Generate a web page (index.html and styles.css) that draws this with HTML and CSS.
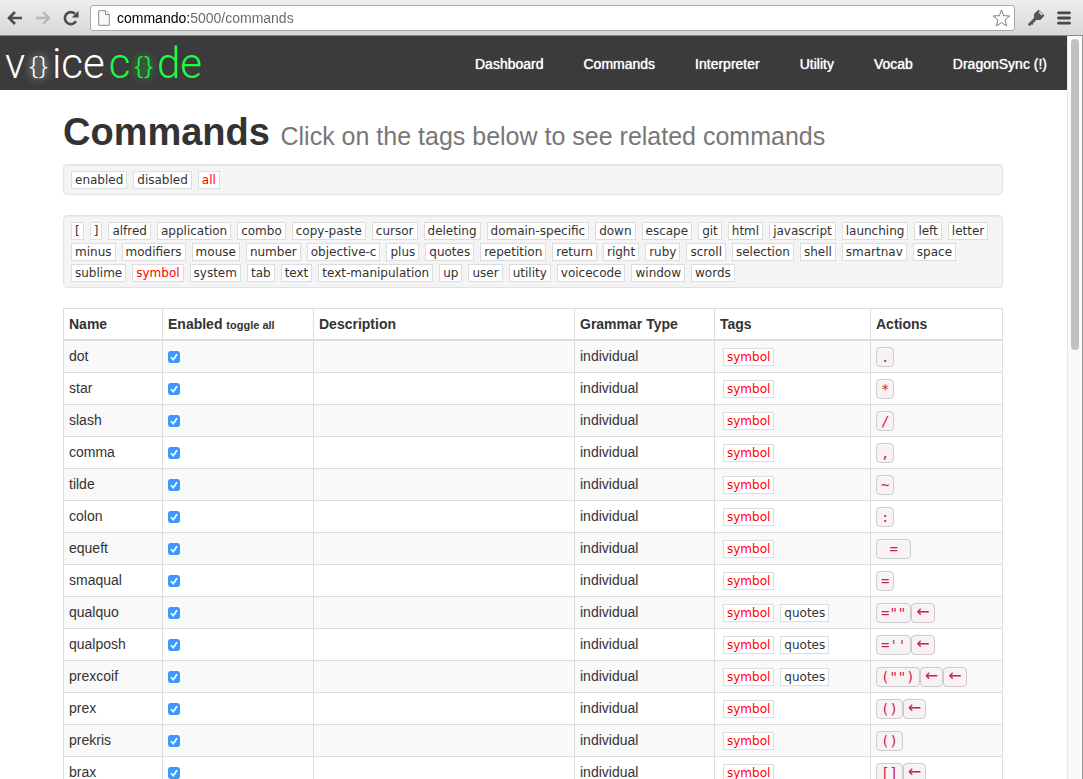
FILE: index.html
```html
<!DOCTYPE html>
<html lang="en">
<head>
<meta charset="utf-8">
<title>VoiceCode Commands</title>
<link rel="stylesheet" href="styles.css">
</head>
<body>
<div class="toolbar">
  <button class="tool" type="button" aria-label="Back"><svg width="16" height="14" viewBox="0 0 16 14"><path d="M8 1 2 7l6 6M2.500 7H15" fill="none" stroke="#4c4c4c" stroke-width="2.600"/></svg></button>
  <button class="tool" type="button" aria-label="Forward"><svg width="16" height="14" viewBox="0 0 16 14"><path d="M8 1l6 6-6 6M13.500 7H1" fill="none" stroke="#b9b9b9" stroke-width="2.400"/></svg></button>
  <button class="tool" type="button" aria-label="Reload"><svg width="16" height="16" viewBox="0 0 16 16"><path d="M13 11.200A6 6 0 1 1 12 3.800" fill="none" stroke="#4c4c4c" stroke-width="2.600"/><path d="M15.500 .8V7.500H8.800z" fill="#4c4c4c"/></svg></button>
  <div class="address">
    <svg width="12" height="16" viewBox="0 0 12 16"><path d="M.7.7h6.800l3.800 3.800v10.800H.7z" fill="#f8f8f8" stroke="#8c8c8c"/><path d="M7.500.7v3.800h3.800" fill="#fff" stroke="#8c8c8c"/></svg>
    <input class="url" type="text" aria-label="Address" value="commando:5000/commands">
    <button class="star" type="button" aria-label="Bookmark"><svg width="19" height="18" viewBox="0 0 19 18"><path d="M9.500 1l2.200 5.700 6.100.3-4.700 3.900 1.600 6-5.200-3.300-5.200 3.300 1.600-6L1.200 7l6.100-.3z" fill="#fff" stroke="#7d7d7d" stroke-linejoin="round"/></svg></button>
  </div>
  <button class="tool" type="button" aria-label="Key"><svg width="18" height="18" viewBox="0 0 18 18"><path d="M10 8 1.800 16.200" stroke="#555" stroke-width="2.800"/><path d="M3.800 13.200l2.200 2.200M5.800 11.400l1.800 1.800" stroke="#555" stroke-width="1.600"/><path d="M11.500 1.200 7.600 4.800l-.2 4 1.800 1.800 4.200-.2L17 6.500z" fill="#555" stroke="#555" stroke-linejoin="round"/><path d="M12.200 3l3 3" stroke="#e4e4e4" stroke-width="1.600"/></svg></button>
  <button class="tool" type="button" aria-label="Menu"><svg width="14" height="14" viewBox="0 0 14 14"><path d="M1.500 1.800h11M1.500 7h11M1.500 12.200h11" stroke="#484848" stroke-width="2.800" stroke-linecap="round"/></svg></button>
</div>
<div class="viewport">
  <div class="page">
    <header class="navbar">
      <a class="logo" href="#"><span>v</span><span class="brace">{}</span><span>ice</span><span class="green">c</span><span class="green brace">{}</span><span class="green">de</span></a>
      <nav class="links"><a href="#">Dashboard</a><a href="#">Commands</a><a href="#">Interpreter</a><a href="#">Utility</a><a href="#">Vocab</a><a href="#">DragonSync (!)</a></nav>
    </header>
    <main class="container">
      <h1>Commands <small>Click on the tags below to see related commands</small></h1>
      <div class="well"><a class="tag" href="#">enabled</a><a class="tag" href="#">disabled</a><a class="tag on" href="#">all</a></div>
      <div class="well"><a class="tag" href="#">[</a><a class="tag" href="#">]</a><a class="tag" href="#">alfred</a><a class="tag" href="#">application</a><a class="tag" href="#">combo</a><a class="tag" href="#">copy-paste</a><a class="tag" href="#">cursor</a><a class="tag" href="#">deleting</a><a class="tag" href="#">domain-specific</a><a class="tag" href="#">down</a><a class="tag" href="#">escape</a><a class="tag" href="#">git</a><a class="tag" href="#">html</a><a class="tag" href="#">javascript</a><a class="tag" href="#">launching</a><a class="tag" href="#">left</a><a class="tag" href="#">letter</a><a class="tag" href="#">minus</a><a class="tag" href="#">modifiers</a><a class="tag" href="#">mouse</a><a class="tag" href="#">number</a><a class="tag" href="#">objective-c</a><a class="tag" href="#">plus</a><a class="tag" href="#">quotes</a><a class="tag" href="#">repetition</a><a class="tag" href="#">return</a><a class="tag" href="#">right</a><a class="tag" href="#">ruby</a><a class="tag" href="#">scroll</a><a class="tag" href="#">selection</a><a class="tag" href="#">shell</a><a class="tag" href="#">smartnav</a><a class="tag" href="#">space</a><a class="tag" href="#">sublime</a><a class="tag on" href="#">symbol</a><a class="tag" href="#">system</a><a class="tag" href="#">tab</a><a class="tag" href="#">text</a><a class="tag" href="#">text-manipulation</a><a class="tag" href="#">up</a><a class="tag" href="#">user</a><a class="tag" href="#">utility</a><a class="tag" href="#">voicecode</a><a class="tag" href="#">window</a><a class="tag" href="#">words</a></div>
      <table class="commands">
        <colgroup><col class="c-name"><col class="c-enabled"><col class="c-desc"><col class="c-type"><col class="c-tags"><col class="c-actions"></colgroup>
        <thead><tr><th>Name</th><th>Enabled <a class="toggle" href="#">toggle all</a></th><th>Description</th><th>Grammar Type</th><th>Tags</th><th>Actions</th></tr></thead>
        <tbody>
          <tr><td>dot</td><td><input type="checkbox" aria-label="dot" checked></td><td></td><td>individual</td><td><div class="tags"><a class="tag on" href="#">symbol</a></div></td><td><div class="keys"><kbd>.</kbd></div></td></tr>
          <tr><td>star</td><td><input type="checkbox" aria-label="star" checked></td><td></td><td>individual</td><td><div class="tags"><a class="tag on" href="#">symbol</a></div></td><td><div class="keys"><kbd>*</kbd></div></td></tr>
          <tr><td>slash</td><td><input type="checkbox" aria-label="slash" checked></td><td></td><td>individual</td><td><div class="tags"><a class="tag on" href="#">symbol</a></div></td><td><div class="keys"><kbd>/</kbd></div></td></tr>
          <tr><td>comma</td><td><input type="checkbox" aria-label="comma" checked></td><td></td><td>individual</td><td><div class="tags"><a class="tag on" href="#">symbol</a></div></td><td><div class="keys"><kbd>,</kbd></div></td></tr>
          <tr><td>tilde</td><td><input type="checkbox" aria-label="tilde" checked></td><td></td><td>individual</td><td><div class="tags"><a class="tag on" href="#">symbol</a></div></td><td><div class="keys"><kbd>~</kbd></div></td></tr>
          <tr><td>colon</td><td><input type="checkbox" aria-label="colon" checked></td><td></td><td>individual</td><td><div class="tags"><a class="tag on" href="#">symbol</a></div></td><td><div class="keys"><kbd>:</kbd></div></td></tr>
          <tr><td>equeft</td><td><input type="checkbox" aria-label="equeft" checked></td><td></td><td>individual</td><td><div class="tags"><a class="tag on" href="#">symbol</a></div></td><td><div class="keys"><kbd> = </kbd></div></td></tr>
          <tr><td>smaqual</td><td><input type="checkbox" aria-label="smaqual" checked></td><td></td><td>individual</td><td><div class="tags"><a class="tag on" href="#">symbol</a></div></td><td><div class="keys"><kbd>=</kbd></div></td></tr>
          <tr><td>qualquo</td><td><input type="checkbox" aria-label="qualquo" checked></td><td></td><td>individual</td><td><div class="tags"><a class="tag on" href="#">symbol</a><a class="tag" href="#">quotes</a></div></td><td><div class="keys"><kbd>=""</kbd><kbd class="arrow">←</kbd></div></td></tr>
          <tr><td>qualposh</td><td><input type="checkbox" aria-label="qualposh" checked></td><td></td><td>individual</td><td><div class="tags"><a class="tag on" href="#">symbol</a><a class="tag" href="#">quotes</a></div></td><td><div class="keys"><kbd>=''</kbd><kbd class="arrow">←</kbd></div></td></tr>
          <tr><td>prexcoif</td><td><input type="checkbox" aria-label="prexcoif" checked></td><td></td><td>individual</td><td><div class="tags"><a class="tag on" href="#">symbol</a><a class="tag" href="#">quotes</a></div></td><td><div class="keys"><kbd>("")</kbd><kbd class="arrow">←</kbd><kbd class="arrow">←</kbd></div></td></tr>
          <tr><td>prex</td><td><input type="checkbox" aria-label="prex" checked></td><td></td><td>individual</td><td><div class="tags"><a class="tag on" href="#">symbol</a></div></td><td><div class="keys"><kbd>()</kbd><kbd class="arrow">←</kbd></div></td></tr>
          <tr><td>prekris</td><td><input type="checkbox" aria-label="prekris" checked></td><td></td><td>individual</td><td><div class="tags"><a class="tag on" href="#">symbol</a></div></td><td><div class="keys"><kbd>()</kbd></div></td></tr>
          <tr><td>brax</td><td><input type="checkbox" aria-label="brax" checked></td><td></td><td>individual</td><td><div class="tags"><a class="tag on" href="#">symbol</a></div></td><td><div class="keys"><kbd>[]</kbd><kbd class="arrow">←</kbd></div></td></tr>
        </tbody>
      </table>
    </main>
  </div>
  <div class="scrollbar"><div class="thumb"></div></div>
</div>
</body>
</html>
```
FILE: styles.css
```css
* { box-sizing: border-box; }
body {
  margin: 0;
  height: 100vh;
  display: flex;
  flex-direction: column;
  overflow: hidden;
  background: #fff;
  color: #333;
  font: 14px/20px "Liberation Sans", Arial, sans-serif;
}
a { color: inherit; text-decoration: none; }
button { border: 0; padding: 0; background: none; display: flex; }

.toolbar {
  flex: none;
  height: 36px;
  display: flex;
  align-items: center;
  gap: 12px;
  padding: 0 12px 0 7px;
  background: linear-gradient(#eee, #d8d8d8);
  border-bottom: 1px solid #8a8a8a;
}
.address {
  flex: 1;
  height: 26px;
  display: flex;
  align-items: center;
  gap: 7px;
  margin-left: -1px;
  padding: 0 3px 0 7px;
  background: #fff;
  border: 1px solid #aaa;
  border-radius: 3px;
}
.url {
  flex: 1;
  border: 0;
  outline: 0;
  padding: 0;
  font: inherit;
  color: transparent;
  background: linear-gradient(90deg, #000 73px, #666 73px);
  -webkit-background-clip: text;
  background-clip: text;
}

.viewport { flex: 1; min-height: 0; display: flex; }
.page { flex: 1; min-width: 0; overflow: hidden; }
.scrollbar {
  width: 16px;
  padding: 3px 3px 0 3px;
  background: #fafafa;
  border-left: 1px solid #e7e7e7;
  border-right: 1px solid #999;
}
.thumb { height: 42%; border-radius: 4px; background: #c1c1c1; }

.navbar {
  height: 54px;
  padding-top: 2px;
  display: flex;
  justify-content: space-between;
  align-items: center;
  background: #3b3b3b;
  color: #fff;
}
.logo {
  display: flex;
  align-items: baseline;
  padding-left: 5px;
  font: 300 42px/50px Roboto, sans-serif;
}
.brace {
  align-self: center;
  margin: 0 4px;
  font: 300 26px/26px "Noto Sans", sans-serif;
  text-shadow: 0 0 8px currentColor;
}
.green { color: #1dfc45; }
:not(.green) + .green { margin-left: 4px; }
.links { display: flex; text-shadow: 0 0 1px #fff; }
.links a { padding: 0 20px; }

.container { max-width: 971px; margin: 0 auto; padding: 0 16px 0 15px; }
h1 { margin: 20px 0 6px; font-size: 38px; line-height: 44px; }
h1 small { font-size: 25px; font-weight: 400; color: #777; }
.well {
  display: flex;
  flex-wrap: wrap;
  gap: 3px 6px;
  margin-bottom: 20px;
  padding: 6px 7px 5px;
  background: #f4f4f4;
  border: 1px solid #e3e3e3;
  border-radius: 4px;
  box-shadow: inset 0 1px 1px rgba(0, 0, 0, .05);
}
.tag {
  padding: 0 3px;
  background: #fff;
  border: 1px solid #ddd;
  font: 12px/16px Verdana, "DejaVu Sans", sans-serif;
}
.tag.on { color: #f00; }

.commands { width: 100%; table-layout: fixed; border-collapse: collapse; }
.c-name { width: 99px; }
.c-enabled { width: 151px; }
.c-type { width: 140px; }
.c-tags { width: 156px; }
.c-actions { width: 132px; }
th, td { border: 1px solid #ddd; padding: 5px; text-align: left; vertical-align: top; }
th { border-bottom-width: 2px; padding-bottom: 4px; }
tbody tr:nth-child(odd) { background: #f9f9f9; }
.toggle { font-size: 11px; }
.tags { display: flex; gap: 6px; padding: 2px 3px 0; }
input[type="checkbox"] {
  display: block;
  appearance: none;
  width: 12px;
  height: 12px;
  margin: 5px 0 0;
  border-radius: 3px;
  background: #3b99fc url("data:image/svg+xml,%3Csvg xmlns='http://www.w3.org/2000/svg' viewBox='0 0 12 12'%3E%3Cpath d='M3 6.300 5.200 8.700 9 3.200' fill='none' stroke='white' stroke-width='1.700'/%3E%3C/svg%3E");
}
.keys { display: flex; padding-top: 1px; }
kbd {
  height: 20px;
  padding: 0 4px;
  white-space: pre;
  color: #c7254e;
  background: #f9f2f4;
  border: 1px solid #ccc;
  border-radius: 4px;
  font: 14px/19px "DejaVu Sans Mono", monospace;
}
kbd.arrow { font: 16px/16px "DejaVu Sans", sans-serif; }
```
